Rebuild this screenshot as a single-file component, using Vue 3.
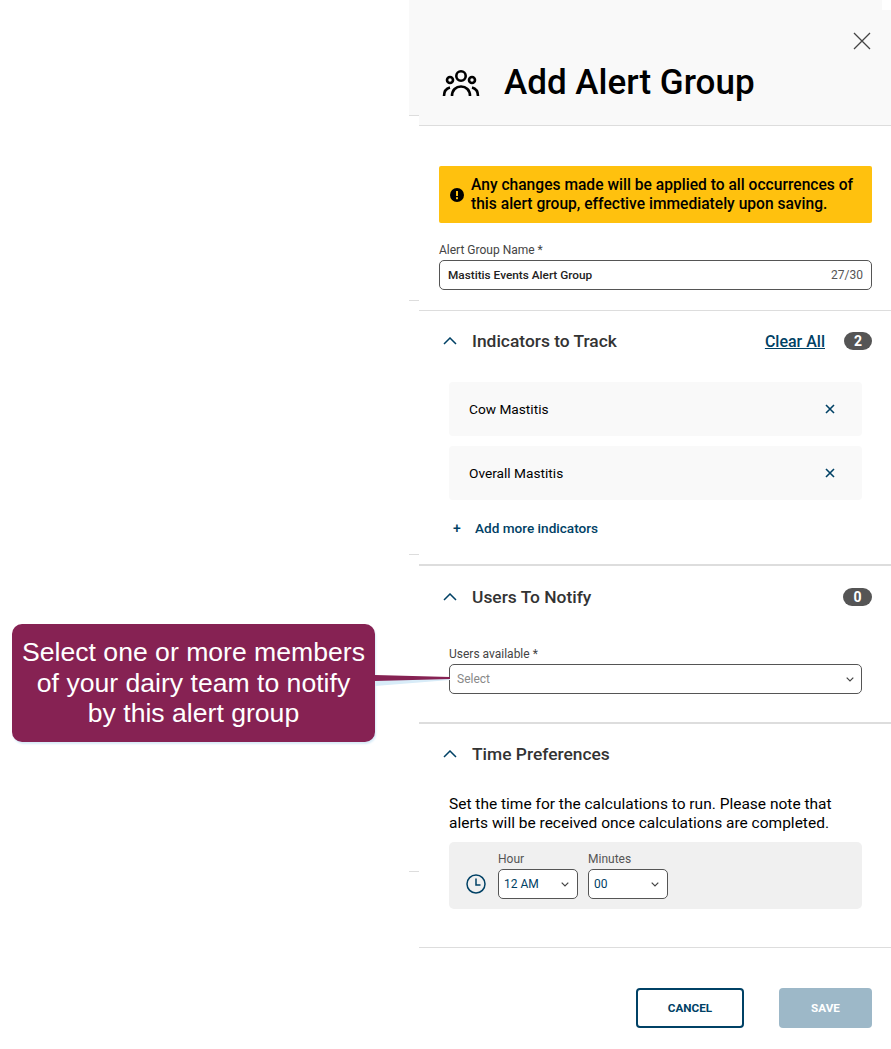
<script setup>
const indicators = ["Cow Mastitis", "Overall Mastitis"];
const ticks = [115, 300, 554, 871];
</script>

<template>
  <div class="page">
    <div class="stage">
      <div class="callout">Select one or more members<br />of your dairy team to notify<br />by this alert group</div>
      <svg class="pointer" width="76" height="14" viewBox="0 0 76 14">
        <polygon points="0,6 75,3 75,6 0,12" fill="#d8ecf8" />
        <polygon points="0,1 75,3 75,5 0,7" fill="#862253" />
      </svg>
    </div>
    <div class="gutter">
      <div class="gutter-top"></div>
      <span v-for="t in ticks" :key="t" class="tick" :style="{ top: t + 'px' }"></span>
    </div>
    <aside class="panel">
      <header class="head">
        <span class="notch"></span>
        <button class="close" aria-label="Close">
          <svg width="20" height="20" viewBox="0 0 20 20" fill="none" stroke="#444" stroke-width="1.3">
            <path d="M2 2l16 16M18 2L2 18" />
          </svg>
        </button>
        <div class="title-row">
          <svg class="group-icon" width="38" height="28" viewBox="0 0 38 28" fill="none" stroke="#000" stroke-width="2.6">
            <circle cx="19" cy="7" r="4.700" />
            <circle cx="8" cy="11" r="3" />
            <circle cx="30" cy="11" r="3" />
            <path d="M10 27c0-6 4-9.500 9-9.500s9 3.500 9 9.500" />
            <path d="M2 27c0-4 2-7.500 6-8.500M36 27c0-4-2-7.500-6-8.500" />
          </svg>
          <h1>Add Alert Group</h1>
        </div>
      </header>

      <section class="intro">
        <div class="alert">
          <svg class="alert-icon" width="14" height="14" viewBox="0 0 14 14">
            <circle cx="7" cy="7" r="7" fill="#000" />
            <rect x="6" y="3" width="2" height="5" fill="#ffc10e" />
            <rect x="6" y="9.200" width="2" height="2" fill="#ffc10e" />
          </svg>
          <p>Any changes made will be applied to all occurrences of this alert group, effective immediately upon saving.</p>
        </div>
        <label class="field-label">Alert Group Name *</label>
        <div class="input">
          <span class="value">Mastitis Events Alert Group</span>
          <span class="count">27/30</span>
        </div>
      </section>

      <section class="block indicators">
        <div class="block-head">
          <svg class="chev" width="14" height="8" viewBox="0 0 14 8" fill="none" stroke="#004165" stroke-width="1.5">
            <path d="M1 7l6-6 6 6" />
          </svg>
          <h2>Indicators to Track</h2>
          <a class="clear">Clear All</a>
          <span class="badge">2</span>
        </div>
        <ul class="items">
          <li v-for="item in indicators" :key="item">
            <span>{{ item }}</span>
            <svg width="10" height="10" viewBox="0 0 10 10" fill="none" stroke="#004165" stroke-width="1.6">
              <path d="M1 1l8 8M9 1L1 9" />
            </svg>
          </li>
        </ul>
        <a class="add"><span class="plus">+</span>Add more indicators</a>
      </section>

      <section class="block users">
        <div class="block-head">
          <svg class="chev" width="14" height="8" viewBox="0 0 14 8" fill="none" stroke="#004165" stroke-width="1.5">
            <path d="M1 7l6-6 6 6" />
          </svg>
          <h2>Users To Notify</h2>
          <span class="badge push">0</span>
        </div>
        <label class="field-label sub">Users available *</label>
        <div class="input select">
          <span class="placeholder">Select</span>
          <svg width="8" height="5" viewBox="0 0 8 5" fill="none" stroke="#444" stroke-width="1.2">
            <path d="M.7.7L4 4l3.300-3.300" />
          </svg>
        </div>
      </section>

      <section class="block time">
        <div class="block-head">
          <svg class="chev" width="14" height="8" viewBox="0 0 14 8" fill="none" stroke="#004165" stroke-width="1.5">
            <path d="M1 7l6-6 6 6" />
          </svg>
          <h2>Time Preferences</h2>
        </div>
        <p class="note">Set the time for the calculations to run. Please note that alerts will be received once calculations are completed.</p>
        <div class="time-box">
          <svg class="clock" width="20" height="20" viewBox="0 0 20 20" fill="none" stroke="#004165" stroke-width="1.5">
            <circle cx="10" cy="10" r="9" />
            <path d="M10 4.500V11h4.500" />
          </svg>
          <div class="time-field">
            <label>Hour</label>
            <div class="mini">
              <span>12 AM</span>
              <svg width="8" height="5" viewBox="0 0 8 5" fill="none" stroke="#444" stroke-width="1.2">
                <path d="M.7.7L4 4l3.300-3.300" />
              </svg>
            </div>
          </div>
          <div class="time-field">
            <label>Minutes</label>
            <div class="mini">
              <span>00</span>
              <svg width="8" height="5" viewBox="0 0 8 5" fill="none" stroke="#444" stroke-width="1.2">
                <path d="M.7.7L4 4l3.300-3.300" />
              </svg>
            </div>
          </div>
        </div>
      </section>

      <footer class="foot">
        <button class="btn cancel">CANCEL</button>
        <button class="btn save">SAVE</button>
      </footer>
    </aside>
  </div>
</template>

<style>
html,
body {
  background: #fff;
}
</style>

<style scoped>
.page {
  display: flex;
  width: 891px;
  height: 1049px;
  overflow: hidden;
  background: #fff;
  font-family: Roboto, "Liberation Sans", sans-serif;
  color: #000;
}
.stage {
  width: 409px;
  flex: none;
  position: relative;
}
.callout {
  position: absolute;
  left: 12px;
  top: 624px;
  width: 363px;
  height: 118px;
  box-sizing: border-box;
  padding-top: 13px;
  background: #862253;
  border-radius: 10px;
  box-shadow: 1px 2px 2px #d8ecf8;
  color: #fff;
  font: 26.600px/30.500px "Liberation Sans", sans-serif;
  text-align: center;
}
.pointer {
  position: absolute;
  left: 375px;
  top: 674px;
}
.gutter {
  width: 10px;
  flex: none;
  position: relative;
}
.gutter-top {
  height: 115px;
  background: #f9f9f9;
}
.tick {
  position: absolute;
  left: 0;
  width: 10px;
  height: 1px;
  background: #ddd;
}
.panel {
  flex: 1;
  min-width: 0;
}
.head {
  height: 125px;
  box-sizing: content-box;
  background: #f9f9f9;
  border-bottom: 1px solid #ddd;
  position: relative;
}
.notch {
  position: absolute;
  right: 0;
  top: 0;
  width: 9px;
  height: 10px;
  background: #fff;
}
.close {
  position: absolute;
  right: 19px;
  top: 31px;
  padding: 0;
  border: 0;
  background: none;
  line-height: 0;
}
.title-row {
  display: flex;
  align-items: center;
  padding: 62px 0 0 23px;
  gap: 24px;
}
h1 {
  margin: 0;
  font-size: 35px;
  line-height: 41px;
  font-weight: 500;
}
.intro {
  padding: 40px 19px 20px 20px;
}
.alert {
  display: flex;
  align-items: center;
  gap: 7px;
  height: 57px;
  box-sizing: border-box;
  padding: 1px 11px 0;
  background: #ffc10e;
  border-radius: 2px;
}
.alert-icon {
  flex: none;
}
.alert p {
  margin: 0;
  font-size: 15.600px;
  line-height: 19px;
  font-weight: 500;
}
.field-label {
  display: block;
  margin: 19px 0 2px;
  font-size: 12px;
  line-height: 16px;
  color: #444;
}
.input {
  height: 30px;
  box-sizing: border-box;
  display: flex;
  align-items: center;
  justify-content: space-between;
  padding: 0 8px;
  border: 1px solid #555;
  border-radius: 5px;
  font-size: 12px;
}
.value {
  font-size: 11.800px;
  font-weight: 500;
  color: #222;
}
.count {
  color: #555;
}
.block {
  box-sizing: border-box;
  border-top: 1px solid #ddd;
}
.block-head {
  display: flex;
  align-items: center;
  height: 60px;
  padding: 0 19px 0 24px;
}
.chev {
  flex: none;
  margin-right: 15px;
}
h2 {
  margin: 0;
  font-size: 17.400px;
  font-weight: 500;
  color: #333;
}
.clear {
  margin-left: auto;
  color: #004165;
  font-size: 16px;
  font-weight: 500;
  text-decoration: underline;
}
.badge {
  width: 28px;
  height: 18px;
  margin-left: 19px;
  border-radius: 9px;
  background: #555;
  color: #fff;
  font-size: 14px;
  font-weight: 700;
  line-height: 18px;
  text-align: center;
}
.badge.push {
  width: 29px;
  margin-left: auto;
}
.indicators {
  height: 254px;
}
.items {
  list-style: none;
  margin: 11px 29px 0 30px;
  padding: 0;
  display: flex;
  flex-direction: column;
  gap: 10px;
}
.items li {
  height: 54px;
  display: flex;
  align-items: center;
  justify-content: space-between;
  padding: 0 27px 0 20px;
  background: #f9f9f9;
  border-radius: 4px;
  font-size: 13.700px;
}
.add {
  display: flex;
  align-items: center;
  margin: 18px 0 0 34px;
  color: #004165;
  font-size: 13.600px;
  font-weight: 500;
  line-height: 20px;
}
.plus {
  width: 22px;
  font-size: 14px;
}
.users {
  height: 158px;
  border-top-width: 2px;
}
.users .block-head {
  height: 62px;
}
.field-label.sub {
  margin: 18px 0 2px 30px;
}
.select {
  margin: 0 29px 0 30px;
  padding: 0 7px;
}
.placeholder {
  color: #888;
}
.time {
  height: 225px;
  border-top-width: 2px;
}
.note {
  margin: 11px 29px 0 30px;
  font-size: 15.500px;
  line-height: 19px;
}
.time-box {
  display: flex;
  align-items: flex-end;
  gap: 10px;
  height: 67px;
  box-sizing: border-box;
  margin: 9px 29px 0 30px;
  padding: 0 0 10px 17px;
  background: #f0f0f0;
  border-radius: 5px;
}
.clock {
  margin: 0 2px 5px 0;
}
.time-field label {
  display: block;
  margin-bottom: 2px;
  font-size: 12px;
  line-height: 16px;
  color: #555;
}
.mini {
  width: 80px;
  height: 30px;
  box-sizing: border-box;
  display: flex;
  align-items: center;
  justify-content: space-between;
  padding: 0 8px 0 5px;
  background: #fff;
  border: 1px solid #555;
  border-radius: 5px;
  font-size: 12px;
  color: #004165;
}
.foot {
  display: flex;
  justify-content: flex-end;
  gap: 35px;
  padding: 40px 19px 0 0;
  border-top: 1px solid #ddd;
}
.btn {
  height: 40px;
  border-radius: 4px;
  font: 700 11.700px Roboto, sans-serif;
}
.cancel {
  width: 108px;
  background: #fff;
  border: 2px solid #004165;
  color: #004165;
}
.save {
  width: 93px;
  background: #9db8c8;
  border: 0;
  color: #fff;
}
</style>
